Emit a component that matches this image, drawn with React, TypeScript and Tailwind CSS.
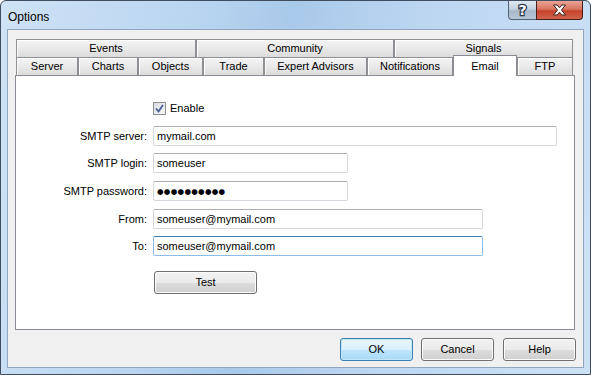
import React from "react";

const font = "font-['Liberation_Sans',Arial,sans-serif]";

const topTabs = [
  { label: "Events", w: "w-[180px]" },
  { label: "Community", w: "w-[198px]" },
  { label: "Signals", w: "w-[179px]" },
];

const bottomTabs = [
  { label: "Server", w: "w-[62px]" },
  { label: "Charts", w: "w-[60px]" },
  { label: "Objects", w: "w-[65px]" },
  { label: "Trade", w: "w-[61px]" },
  { label: "Expert Advisors", w: "w-[103px]" },
  { label: "Notifications", w: "w-[86px]" },
  { label: "Email", w: "w-[64px]", active: true },
  { label: "FTP", w: "w-[56px]" },
];

const Tab = ({ label, w, active }: { label: string; w: string; active?: boolean }) =>
  active ? (
    <div
      className={`${w} relative z-10 -mt-[2px] -mb-[1px] h-[21px] bg-white border border-b-0 border-[#898c95] flex justify-center pt-[2px] text-[11px] text-black`}
    >
      {label}
    </div>
  ) : (
    <div
      className={`${w} h-[18px] border border-b-0 border-[#8d8f94] bg-[linear-gradient(to_bottom,#f4f4f4,#e9e9e9_50%,#dcdcdc)] shadow-[inset_1px_1px_0_#ffffff] flex items-center justify-center text-[11px] text-black`}
    >
      {label}
    </div>
  );

const Field = ({
  label,
  value,
  w,
  focused,
  mono,
}: {
  label: string;
  value: string;
  w: string;
  focused?: boolean;
  mono?: boolean;
}) => (
  <div className="flex items-center h-[20px]">
    <div className="w-[131px] text-right text-[11px] text-black">{label}</div>
    <div
      className={`ml-[6px] ${w} h-[20px] rounded-[2px] border flex items-center pl-[3px] text-[11px] text-black bg-white ${
        focused
          ? "border-[#8cbde9] border-t-[#3d7bad]"
          : "border-[#d5d9df] border-t-[#abadb3]"
      }`}
    >
      {mono ? (
        <span className="font-['DejaVu_Sans'] text-[7.5px] tracking-[0.3px] pt-[1px]">{value}</span>
      ) : (
        value
      )}
    </div>
  </div>
);

const Button = ({ label, def, w }: { label: string; def?: boolean; w: string }) => (
  <div
    className={`${w} h-[23px] rounded-[3px] border flex items-center justify-center text-[11px] text-black ${
      def
        ? "border-[#3c7fb1] bg-[linear-gradient(to_bottom,#eaf6fd,#d9f0fc_50%,#bee6fd_51%,#a7d9f5)] shadow-[inset_0_0_0_1px_#c4e5f6]"
        : "border-[#707070] bg-[linear-gradient(to_bottom,#f2f2f2,#ebebeb_50%,#dddddd_51%,#cfcfcf)] shadow-[inset_0_0_0_1px_#fcfcfc]"
    }`}
  >
    {label}
  </div>
);

const HelpBtn = () => (
  <div className="w-[28px] h-[19px] rounded-bl-[4px] border-l border-b border-[#4f6275] bg-[linear-gradient(to_bottom,#dfe8f1,#c4d1de_45%,#a8b8c9_55%,#b6c6d6)] flex items-center justify-center">
    <span className="font-['DejaVu_Sans'] text-[14px] font-bold leading-none text-white [-webkit-text-stroke:2.5px_#2b3746] [paint-order:stroke_fill]">
      ?
    </span>
  </div>
);

const CloseBtn = () => (
  <div className="w-[47px] h-[19px] rounded-br-[4px] border-l border-r border-b border-[#4a1e16] bg-[linear-gradient(to_bottom,#e9a596,#d87460_45%,#c7432a_55%,#d0644c)] flex items-center justify-center">
    <svg width="15" height="12" viewBox="0 0 15 12">
      <path
        d="M1.5 1 L5.2 1 L7.5 3.8 L9.8 1 L13.5 1 L9.5 6 L13.5 11 L9.8 11 L7.5 8.2 L5.2 11 L1.5 11 L5.5 6 Z"
        fill="#ffffff"
        stroke="#3a2420"
        strokeWidth="1"
        strokeLinejoin="round"
      />
    </svg>
  </div>
);

export default function App() {
  return (
    <div className={`${font} w-[591px] h-[375px] overflow-hidden`}>
      <div className="w-[591px] h-[375px] rounded-t-[6px] border border-[#3f4d5e] bg-[linear-gradient(100deg,#cfe2f6_0%,#b9d5f0_30%,#a9c9ea_45%,#bcd6f1_65%,#cde1f6_100%)] flex flex-col">
        {/* title bar */}
        <div className="h-[28px] flex items-start shrink-0">
          <div className="pl-[7px] pt-[7px] text-[12px] text-black">Options</div>
          <div className="ml-auto mr-[7px] flex">
            <HelpBtn />
            <CloseBtn />
          </div>
        </div>

        {/* client area */}
        <div className="mx-[6px] mb-[6px] flex-1 bg-[#f0f0f0] border border-[#8fa6bd] flex flex-col pl-[7px] pr-[7px] pt-[9px]">
          <div className="w-[560px] flex flex-col">
            <div className="flex ml-px">
              {topTabs.map((t) => (
                <Tab key={t.label} {...t} />
              ))}
            </div>
            <div className="flex ml-px items-end">
              {bottomTabs.map((t) => (
                <Tab key={t.label} {...t} />
              ))}
            </div>
            <div className="h-[255px] bg-white border border-[#898c95] flex flex-col pt-[25px]">
              <div className="flex items-center h-[14px]">
                <div className="w-[137px]" />
                <div className="w-[13px] h-[13px] border border-[#8e8f8f] bg-[linear-gradient(135deg,#d8dde4,#f7f8fa)] flex items-center justify-center">
                  <svg width="9" height="9" viewBox="0 0 9 9">
                    <path d="M1 4.5 L3.5 7.5 L8 1" fill="none" stroke="#4a5f97" strokeWidth="1.8" />
                  </svg>
                </div>
                <span className="ml-[4px] text-[11px] text-black">Enable</span>
              </div>
              <div className="mt-[11px]">
                <Field label="SMTP server:" value="mymail.com" w="w-[404px]" />
              </div>
              <div className="mt-[7px]">
                <Field label="SMTP login:" value="someuser" w="w-[195px]" />
              </div>
              <div className="mt-[8px]">
                <Field label="SMTP password:" value="●●●●●●●●●●" w="w-[195px]" mono />
              </div>
              <div className="mt-[8px]">
                <Field label="From:" value="someuser@mymail.com" w="w-[330px]" />
              </div>
              <div className="mt-[7px]">
                <Field label="To:" value="someuser@mymail.com" w="w-[330px]" focused />
              </div>
              <div className="mt-[15px] pl-[138px]">
                <Button label="Test" w="w-[103px]" />
              </div>
            </div>
          </div>
          <div className="mt-[8px] flex justify-end">
            <Button label="OK" def w="w-[73px]" />
            <div className="w-[8px]" />
            <Button label="Cancel" w="w-[73px]" />
            <div className="w-[9px]" />
            <Button label="Help" w="w-[73px]" />
          </div>
        </div>
      </div>
    </div>
  );
}
